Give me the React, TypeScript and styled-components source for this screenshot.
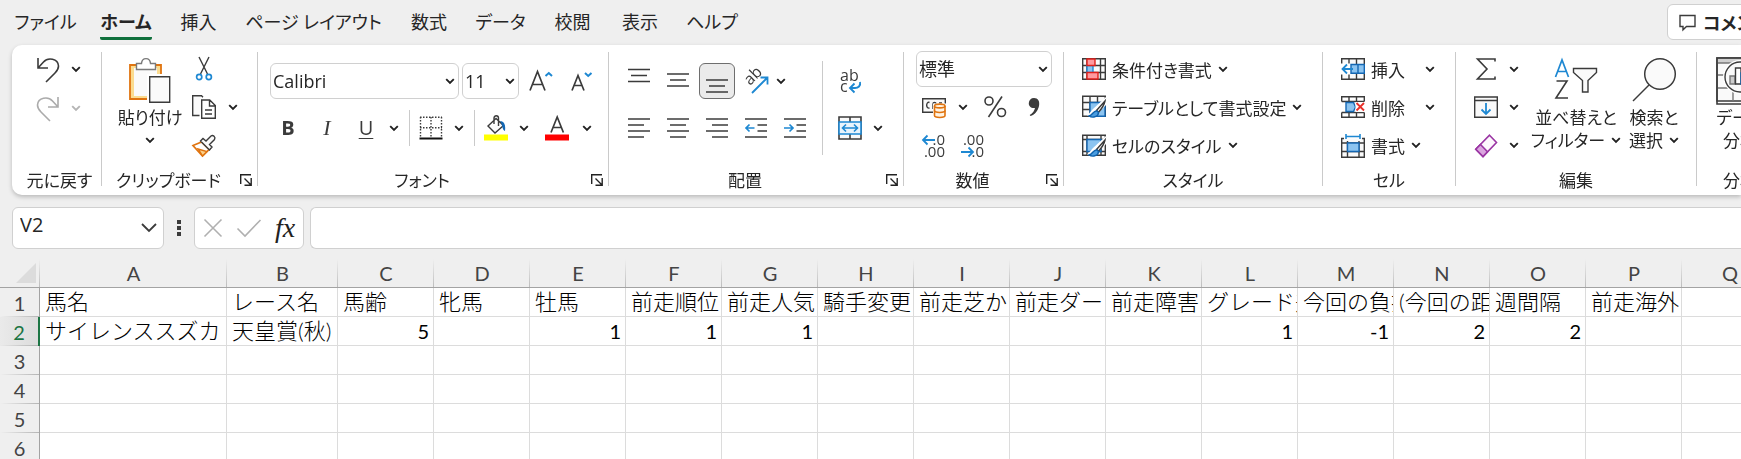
import React from "react";
import styled, { createGlobalStyle, css } from "styled-components";

const ui = `"Open Sans", "Noto Sans CJK JP", sans-serif`;
const sheetFont = `Lato, "Noto Sans CJK JP", sans-serif`;
const ink = "#3b3b3b";
const blue = "#1e88d2";
const orange = "#e07410";
const hair = "#d0d0d0";

const Global = createGlobalStyle`
  *, *::before, *::after { box-sizing: border-box; }
  body { margin: 0; background: #efefef; color: #262626; font-family: ${ui}; font-feature-settings: "palt"; }
  button, input, select { font: inherit; color: inherit; font-feature-settings: inherit; }
  svg { display: block; flex: none; overflow: visible; }
`;

const Window = styled.div`
  height: 100vh;
  display: flex;
  flex-direction: column;
  overflow: hidden;
`;

/* ---------- tabs ---------- */
const TabBar = styled.header`
  display: flex;
  align-items: flex-start;
  height: 45px;
  padding: 4px 0 0 4px;
  flex: none;
`;
const Nav = styled.nav`
  display: flex;
`;
const Tab = styled.a<{ $w: number; $active?: boolean }>`
  width: ${(p) => p.$w}px;
  height: 36px;
  display: flex;
  justify-content: center;
  color: #262626;
  text-decoration: none;
  white-space: nowrap;
  font-size: 18px;
  line-height: 36px;
  font-weight: ${(p) => (p.$active ? 700 : 400)};
  span { height: 36px; border-bottom: 3px solid ${(p) => (p.$active ? "#10703c" : "transparent")}; border-radius: 2px; }
`;
const CommentButton = styled.button`
  display: flex;
  align-items: center;
  flex: none;
  gap: 7px;
  width: 130px;
  height: 36px;
  margin: 0 -56px 0 auto;
  padding: 0 0 0 11px;
  border: 1px solid ${hair};
  border-radius: 6px;
  background: #fff;
  font-size: 18px;
  font-weight: 700;
  white-space: nowrap;
`;

/* ---------- ribbon ---------- */
const Ribbon = styled.section`
  display: flex;
  flex: none;
  height: 150px;
  margin-left: 12px;
  overflow: hidden;
  background: #fff;
  border-radius: 10px 0 0 10px;
  font-size: 17px;
`;
const RibbonShadow = styled.div`
  flex: none;
  filter: drop-shadow(0 2px 2px rgba(0, 0, 0, 0.22));
`;
const GroupBox = styled.div<{ $w: number }>`
  display: flex;
  flex-direction: column;
  flex: none;
  width: ${(p) => p.$w}px;
`;
const Rule = styled.div<{ $short?: boolean; $inner?: boolean }>`
  flex: none;
  width: 1px;
  background: #cacaca;
  margin: ${(p) => (p.$inner ? "16px 9px 10px" : p.$short ? "0 0 0 2px" : "7px 0 9px")};
  ${(p) => p.$short && css`height: 36px;`}
`;
const Body = styled.div<{ $left?: number; $gap?: number }>`
  display: flex;
  height: 120px;
  padding-left: ${(p) => p.$left ?? 12}px;
  gap: ${(p) => p.$gap ?? 0}px;
`;
const Foot = styled.div<{ $indent?: number }>`
  display: flex;
  align-items: center;
  height: 30px;
  padding-left: ${(p) => p.$indent ?? 0}px;
  white-space: nowrap;
`;
const FootLabel = styled.span`
  flex: 1;
  padding-bottom: 2px;
  text-align: center;
`;
const ThreeRows = styled.div`
  display: flex;
  flex-direction: column;
  padding-top: 5px;
`;
const TwoRows = styled.div`
  display: flex;
  flex-direction: column;
  gap: 11px;
  padding-top: 18px;
`;
const Row = styled.div<{ $tall?: boolean }>`
  display: flex;
  align-items: center;
  gap: 3px;
  height: ${(p) => (p.$tall ? 39 : 36)}px;
`;
const Split = styled.div`
  display: flex;
`;
const IconButton = styled.button<{ $w?: number; $on?: boolean }>`
  display: flex;
  align-items: center;
  justify-content: center;
  flex: none;
  width: ${(p) => p.$w ?? 36}px;
  height: 36px;
  padding: 0;
  border: 1px solid ${(p) => (p.$on ? "#6e6e6e" : "transparent")};
  border-radius: 6px;
  background: ${(p) => (p.$on ? "#ebebeb" : "transparent")};
`;
const LabelButton = styled.button`
  display: flex;
  align-items: center;
  gap: 6px;
  height: 36px;
  padding: 0;
  border: 0;
  background: transparent;
  white-space: nowrap;
`;
const BigButton = styled.button<{ $w: number }>`
  display: flex;
  flex-direction: column;
  align-items: center;
  flex: none;
  width: ${(p) => p.$w}px;
  padding: 12px 0 0;
  border: 0;
  background: transparent;
  line-height: 23px;
  white-space: nowrap;
`;
const BigIcon = styled.span`
  display: flex;
  justify-content: center;
  height: 49px;
`;
const BigLine = styled.span`
  display: flex;
  align-items: center;
  gap: 6px;
  height: 23px;
`;
const SelectWrap = styled.div<{ $w: number }>`
  display: grid;
  align-items: center;
  flex: none;
  width: ${(p) => p.$w}px;
  height: 36px;
  select, svg { grid-area: 1 / 1; }
  svg { justify-self: end; margin-right: 4px; pointer-events: none; }
`;
const Select = styled.select`
  appearance: none;
  width: 100%;
  height: 36px;
  padding: 0 2px;
  border: 1px solid ${hair};
  border-radius: 6px;
  background: #fff;
  font-size: 18px;
`;
const Glyph = styled.span<{ $kind: "b" | "i" | "u" }>`
  color: ${ink};
  font-size: 20px;
  line-height: 24px;
  ${(p) => p.$kind === "b" && css`font-weight: 700;`}
  ${(p) => p.$kind === "i" && css`font-family: "Liberation Serif", serif; font-style: italic; font-size: 22px;`}
  ${(p) => p.$kind === "u" && css`text-decoration: underline; text-underline-offset: 3px; text-decoration-thickness: 1px;`}
`;

/* ---------- formula bar ---------- */
const FormulaBar = styled.div`
  display: flex;
  flex: none;
  height: 42px;
  margin: 12px 0 10px 12px;
`;
const Field = styled.div`
  display: flex;
  align-items: center;
  border: 1px solid ${hair};
  border-radius: 6px;
  background: #fff;
`;
const NameField = styled(Field)`
  width: 152px;
  padding: 0 4px 0 7px;
`;
const NameInput = styled.input`
  flex: 1;
  min-width: 0;
  height: 32px;
  margin-bottom: 8px;
  padding: 0;
  border: 0;
  background: transparent;
  font-size: 20px;
`;
const Dots = styled.div`
  display: flex;
  align-items: center;
  justify-content: center;
  width: 30px;
`;
const FxField = styled(Field)`
  width: 110px;
`;
const FxText = styled.span`
  font: italic 400 28px "Liberation Serif", serif;
  color: #222;
`;
const FormulaInput = styled.input`
  flex: 1;
  min-width: 0;
  margin-left: 6px;
  padding: 0 10px;
  border: 1px solid ${hair};
  border-right: 0;
  border-radius: 6px 0 0 6px;
  background: #fff;
  font-size: 20px;
`;

/* ---------- sheet ---------- */
const SheetArea = styled.main`
  flex: 1;
  min-height: 0;
  overflow: hidden;
`;
const Sheet = styled.table`
  table-layout: fixed;
  width: 0;
  border-collapse: separate;
  border-spacing: 0;
  font-family: ${sheetFont};
  font-feature-settings: normal;
`;
const Col = styled.col<{ $w: number }>`
  width: ${(p) => p.$w}px;
`;
const headText = css`
  padding: 0;
  font-size: 20px;
  font-weight: 400;
  line-height: 28px;
  color: #444;
`;
const ColHead = styled.th`
  ${headText}
  height: 29px;
  border-bottom: 1px solid #a3a3a3;
  background: linear-gradient(to bottom, transparent, #bdbdbd) right / 1px 100% no-repeat;
`;
const Corner = styled.th`
  height: 29px;
  padding: 0;
  border-bottom: 1px solid #a3a3a3;
  background: linear-gradient(to bottom, transparent, #bdbdbd) right / 1px 100% no-repeat;
  svg { margin-left: 15px; }
`;
const RowHead = styled.th<{ $on?: boolean }>`
  ${headText}
  height: 29px;
  border-right: 1px solid #a3a3a3;
  background: linear-gradient(to right, transparent, #b5b5b5) bottom / 100% 1px no-repeat;
  ${(p) =>
    p.$on &&
    css`
      color: #1c7544;
      border-right: 2px solid #1c7544;
      background: linear-gradient(to right, transparent, #b5b5b5) bottom / 100% 1px no-repeat,
        linear-gradient(to right, #eaeaea, #dcdcdc);
    `}
`;
const Cell = styled.td<{ $num?: boolean }>`
  height: 29px;
  padding: 0 4px 0 5px;
  border-right: 1px solid #dcdcdc;
  border-bottom: 1px solid #dcdcdc;
  background: #fff;
  color: #000;
  overflow: hidden;
  white-space: nowrap;
  font-size: ${(p) => (p.$num ? 20 : 22)}px;
  font-weight: ${(p) => (p.$num ? 400 : 300)};
  line-height: 28px;
  text-align: ${(p) => (p.$num ? "right" : "left")};
`;

/* ---------- icons ---------- */
type SvgProps = { w: number; h: number; c?: string; sw?: number; children: React.ReactNode };
const Svg = ({ w, h, c = ink, sw = 1.4, children }: SvgProps) => (
  <svg width={w} height={h} viewBox={`0 0 ${w} ${h}`} fill="none" stroke={c} strokeWidth={sw} aria-hidden="true">
    {children}
  </svg>
);
const Chevron = ({ c = "#222" }: { c?: string }) => (
  <Svg w={10} h={7} c={c} sw={1.9}>
    <path d="M1.2 1.2 5 5l3.8-3.8" />
  </Svg>
);
const Launcher = () => (
  <Svg w={12} h={12} c="#222">
    <path d="M.7 10V.7H11M4.5 4.5l6 6M11.2 4v7.2H4.5" />
  </Svg>
);
const UndoIcon = ({ flip }: { flip?: boolean }) => (
  <Svg w={24} h={26} c={flip ? "#ababab" : ink} sw={1.6}>
    <g transform={flip ? "matrix(-1 0 0 1 24 0)" : undefined}>
      <path d="M2 1v10h10M2 11 7.5 5C12 0 22 1.5 22.5 9c0 3-1.5 5-3.5 7l-9 9" />
    </g>
  </Svg>
);
const PasteIcon = () => (
  <Svg w={42} h={46}>
    <path d="M1 8h31v34H1z" fill="#fbdc90" stroke={orange} strokeWidth={1.8} />
    <path d="M5 11h23v28H5z" fill="#fafafa" stroke="none" />
    <path d="M18 17h24v29H18z" fill="#fff" stroke="none" />
    <path d="M7.5 12.500V6.500h5c.5-6.500 8.500-6.500 9 0h5v6z" fill="#fff" stroke="#7a7a7a" />
    <path d="M20.700 19.700h20v25.600h-20z" fill="#fafafa" />
  </Svg>
);
const CutIcon = () => (
  <Svg w={16} h={24}>
    <path d="M3 0l8.500 17M13 0 4.500 17" />
    <circle cx="3.200" cy="20" r="2.600" stroke={blue} strokeWidth={1.7} />
    <circle cx="12.800" cy="20" r="2.600" stroke={blue} strokeWidth={1.7} />
  </Svg>
);
const CopyIcon = () => (
  <Svg w={24} h={24}>
    <path d="M7.5 20.500H.7V.7h8.800l1.500 1.500" fill="#fafafa" />
    <path d="M9.700 5h8l5.600 5.600v12.700H9.700zM17.500 5v6h6M13 15h7M13 19h7" />
  </Svg>
);
const BrushIcon = () => (
  <Svg w={24} h={22}>
    <path d="M1 10.500 9.500 7l7.500 7.500L10.500 21z" fill="#fff" stroke={orange} strokeWidth={1.7} />
    <path d="M6 14l9 2.500-4.500 4.500z" fill="#fbcf87" stroke={orange} />
    <path d="M8.500 6l2.500-2.500 3 2.500 5-5c2-1.500 5 1 3.500 3.500l-5 5 2.500 2.500-2.500 3z" fill="#fafafa" />
  </Svg>
);
const GrowA = ({ down }: { down?: boolean }) => (
  <Svg w={24} h={22}>
    {down ? (
      <>
        <path d="M2 20.500 8 5.500l6 15M4.200 15.500h7.600" strokeWidth={1.7} />
        <path d="M15 3l3.200 3L21.500 3" stroke={blue} strokeWidth={2} />
      </>
    ) : (
      <>
        <path d="M1 20.500 8.500 1.500l7.500 19M3.600 14.500h9.800" strokeWidth={1.7} />
        <path d="M16.500 6 19.800 3 23 6" stroke={blue} strokeWidth={2} />
      </>
    )}
  </Svg>
);
const BorderIcon = () => (
  <Svg w={24} h={24}>
    <path d="M1 1.200h22M1 11.700h22" strokeDasharray="1.500 1.500" />
    <path d="M1.500 1v20M12 1v20M22.500 1v20" strokeDasharray="1.500 1.500" />
    <path d="M.5 22.500h23" stroke="#111" strokeWidth={1.8} />
  </Svg>
);
const FillIcon = () => (
  <Svg w={24} h={26}>
    <path d="M12 3.500 4 11l7 7 8.500-7.500zM10 9V3c0-3 4.500-3 4.500 0v8" fill="#fafafa" />
    <path d="M16 6c4 0 6 4 5 10-3-1-2-5-5-10z" fill="#1467b3" stroke="none" />
    <path d="M0 19.500h24v6H0z" fill="#ff0" stroke="none" />
  </Svg>
);
const FontColorIcon = () => (
  <Svg w={24} h={26}>
    <path d="M6 17.500 12.200 2l6.200 15.500M8 12.500h8.400" strokeWidth={1.7} />
    <path d="M0 19.500h24v6H0z" fill="#f00" stroke="none" />
  </Svg>
);
const Lines = ({ rows, h }: { rows: number[][]; h: number }) => (
  <Svg w={22} h={h} sw={1.5}>
    {rows.map(([a, b, y]) => (
      <path key={y} d={`M${a} ${y}H${b}`} />
    ))}
  </Svg>
);
const Indent = ({ right }: { right?: boolean }) => (
  <Svg w={22} h={20} sw={1.5}>
    <path d="M0 1h22M12.500 7H22M12.500 13H22M0 19h22" />
    <path d={right ? "M0 10h9M5.500 6.500 9 10l-3.500 3.500" : "M9.500 10H1M4.500 6.500 1 10l3.500 3.500"} stroke={blue} strokeWidth={1.7} />
  </Svg>
);
const OrientIcon = () => (
  <Svg w={26} h={26}>
    <text x="0" y="0" transform="translate(7 18) rotate(-45)" fontSize="16" fill={ink} stroke="none">
      ab
    </text>
    <path d="M9 25 24 10M17.500 9.500H24.500V16.500" stroke={blue} strokeWidth={1.8} />
  </Svg>
);
const WrapIcon = () => (
  <Svg w={22} h={26}>
    <text x="1" y="13" fontSize="16" fill={ink} stroke="none">
      ab
    </text>
    <text x="1" y="24" fontSize="16" fill={ink} stroke="none">
      c
    </text>
    <path d="M21 14c1 4-2 6-5 6H11M15.500 15.500 11 20l4.500 4.500" stroke={blue} strokeWidth={1.9} />
  </Svg>
);
const MergeIcon = () => (
  <Svg w={24} h={24}>
    <path d="M1 1h22v22H1zM12 1v5M12 18v5" fill="#fafafa" strokeWidth={1.6} />
    <path d="M1 6h22v12H1z" fill="#e9f4fc" stroke={blue} strokeWidth={1.6} />
    <path d="M4.500 12h15M8 8.500 4.500 12 8 15.500M16 8.500l3.500 3.500-3.500 3.500" stroke={blue} strokeWidth={1.6} />
  </Svg>
);
const CurrencyIcon = () => (
  <Svg w={24} h={22}>
    <path d="M.7 2.700h22.600v13.600H.7z" fill="#fafafa" />
    <path d="M7.500 6.500C4 5 3.500 13 7.500 12M11 13V8c0-2 3-2 3 0M17 7h3" />
    <path d="M11 7.500h13V22H11z" fill="#fff" stroke="none" />
    <path d="M12.500 10v9.500c0 2.600 10.500 2.600 10.500 0V10" fill="#fff3e2" stroke={orange} strokeWidth={1.6} />
    <ellipse cx="17.750" cy="10" rx="5.250" ry="1.900" fill="#fff3e2" stroke={orange} strokeWidth={1.6} />
    <path d="M12.500 14.500c0 2.600 10.500 2.600 10.500 0" stroke={orange} strokeWidth={1.6} />
  </Svg>
);
const PercentIcon = () => (
  <Svg w={24} h={24} sw={1.6}>
    <circle cx="6" cy="6" r="4" />
    <circle cx="18.500" cy="17.500" r="4" />
    <path d="M19 1.500 5.500 22" />
  </Svg>
);
const CommaIcon = () => (
  <Svg w={14} h={20}>
    <path d="M7 1c4 0 6 3 5 8-1 5-4.500 9-8.500 10l-.8-1C6 16 7.500 13.500 8 11 4 11.500 1.500 9 1.800 6 2 3 4 1 7 1z" fill={ink} stroke="none" />
  </Svg>
);
const DecimalIcon = ({ less }: { less?: boolean }) => (
  <Svg w={24} h={26}>
    <text x="23" y="12" fontSize="15" fill={ink} stroke="none" textAnchor="end">
      {less ? ".00" : ".0"}
    </text>
    <text x="23" y="24" fontSize="15" fill={ink} stroke="none" textAnchor="end">
      {less ? ".0" : ".00"}
    </text>
    <path d={less ? "M0 19h12M7.500 14.500 12 19l-4.500 4.500" : "M13 7H1M5.500 2.500 1 7l4.500 4.500"} stroke={blue} strokeWidth={1.8} />
  </Svg>
);
const gridPath = "M.7.7h22.600v20.600H.7zM5 .7v20.600M18.500.7v20.600M.7 7.500h22.600M.7 14.500h22.600";
const CondIcon = () => (
  <Svg w={24} h={22}>
    <path d={gridPath} fill="#fafafa" />
    <path d="M5 7.500h6v7H5z" fill="#8cc4f0" stroke={blue} />
    <path d="M5 1h8v6.500H5zM5 14.500h11V21H5z" fill="#ff9a9f" stroke="#e0201c" />
  </Svg>
);
const PaintBrush = () => (
  <>
    <path d="M24 2 11 14l-6 7h8l11-11z" fill="#fff" stroke="none" />
    <path d="M23 6 14.500 15.500l2 1.800C19 14.500 22 11 23 6z" fill="#fafafa" />
    <path d="M15 16c-4-.5-4 4-8 5 4 2.500 9.500.5 9.500-3.500z" fill="#4a9de0" stroke="#0f62ad" />
  </>
);
const TableIcon = () => (
  <Svg w={24} h={24}>
    <path d="M.7 1.200h22.600v20H.7zM8 1.200v20M15.500 1.200v20M.7 7.500h22.600M.7 14.500h22.600" fill="#fafafa" />
    <path d="M8 7.500h15v13.700H8z" fill="#8cc4f0" stroke="#1467b3" />
    <PaintBrush />
  </Svg>
);
const StyleIcon = () => (
  <Svg w={24} h={24}>
    <path d="M.7 1.200h22.600v20H.7zM5 1.200v20M.7 5.500h22.600M.7 17.500h22.600M19 1.200v20" fill="#fafafa" />
    <path d="M5 5.500h14v12H5z" fill="#8cc4f0" stroke="#1467b3" />
    <PaintBrush />
  </Svg>
);
const InsertIcon = () => (
  <Svg w={24} h={22}>
    <path d="M.7 6V.7h22.600v20.600H.7V16M8 .7V6M15.500.7V6M8 16v5.300M15.500 16v5.300" fill="#fafafa" />
    <path d="M10 6.500h13.300v8.800H10zM17 6.500v8.800" fill="#8cc4f0" stroke="#1467b3" />
    <path d="M0 5.500h9v11H0z" fill="#fff" stroke="none" />
    <path d="M12 11H1.500M6 6.500 1.500 11 6 15.500" stroke={blue} strokeWidth={1.8} />
  </Svg>
);
const DeleteIcon = () => (
  <Svg w={24} h={22}>
    <path d="M.7 5.500V.7h22.600v4.800M.7 5.500h22.600M.7 16.500v4.800h22.600v-4.800M.7 16.500h22.600M8 .7v4.800M15.500.7v4.800M8 16.500v4.800M15.500 16.500v4.800" />
    <path d="M5 6.500h7.500L14.500 11l-2 4.500H5z" fill="#8cc4f0" stroke="#1467b3" />
    <path d="M14.500 6h9.500v10h-9.500z" fill="#fff" stroke="none" />
    <path d="M15.500 7l7.500 7.500M23 7l-7.500 7.500" stroke="#e8302a" strokeWidth={1.8} />
  </Svg>
);
const FormatIcon = () => (
  <Svg w={24} h={24}>
    <path d="M3 4.500H.7v18.800h22.600V4.500H21M6.500 7v16.300M18 7v16.300M.7 9h22.600M.7 17.500h22.600" fill="#fafafa" />
    <path d="M6.500 9H18v8.500H6.500z" fill="#8cc4f0" stroke="#1467b3" />
    <path d="M5 0v5M19 0v5M5 2.500h14" stroke={blue} strokeWidth={1.6} />
  </Svg>
);
const SumIcon = () => (
  <Svg w={20} h={22} sw={1.6}>
    <path d="M19 3.500V1H1.500l9.500 10-9.500 10H19v-2.500" />
  </Svg>
);
const FillDownIcon = () => (
  <Svg w={24} h={22}>
    <path d="M.7 1h22.600v20.300H.7zM.7 4.500h22.600" fill="#fafafa" />
    <path d="M12 7v11M7.500 13.500 12 18l4.500-4.500" stroke={blue} strokeWidth={1.8} />
  </Svg>
);
const EraserIcon = () => (
  <Svg w={24} h={24} c="#9a35a3" sw={1.6}>
    <path d="M15.500 1.200 22.500 8.500 9 22.500 1.800 15.200z" fill="#fdf7fd" />
    <path d="M6.500 10.500 13.500 17.700 9 22.500 1.800 15.200z" fill="#dba5df" />
  </Svg>
);
const SortFilterIcon = () => (
  <Svg w={44} h={44}>
    <path d="M1.500 20 8 3l6.500 17M3.600 14.500h8.800" stroke={blue} strokeWidth={1.7} />
    <path d="M2.500 24H13L2 41h12" strokeWidth={1.6} />
    <path d="M19.500 11.500h23v4L34 23.500v11.500h-5.500V23.500l-9-8z" fill="#fafafa" />
  </Svg>
);
const SearchIcon = () => (
  <Svg w={44} h={46} sw={1.5}>
    <circle cx="28" cy="17" r="15.300" fill="#fafafa" />
    <path d="M17 28 1 44" />
  </Svg>
);
const AnalyzeIcon = () => (
  <Svg w={48} h={48}>
    <path d="M1 1h46v43H1z" fill="#fafafa" />
    <path d="M1 1h46v5H1z" fill="#cfcfcf" stroke="#777" />
    <path d="M1 18h8M1 31h14M17 35v9M32 35v9" stroke="#777" />
    <path d="M1 1h46v46H1z" strokeWidth={1.6} />
    <circle cx="24" cy="20" r="17" fill="#fff" stroke="none" />
    <circle cx="24" cy="20" r="15" fill="#fafafa" />
    <path d="M14 19h5v8h-5z" fill="#ccc" stroke="#777" />
    <path d="M19.500 11h5.500v16h-5.500z" fill="#fff" />
    <path d="M25 16h5v11h-5z" fill="#8cc4f0" stroke="#1467b3" />
  </Svg>
);
const CommentIcon = () => (
  <Svg w={17} h={17}>
    <path d="M1 1.500h15v11H7.500L4 15.800V12.500H1z" />
  </Svg>
);

/* ---------- pieces ---------- */
const More = ({ label, w = 20, c }: { label: string; w?: number; c?: string }) => (
  <IconButton type="button" $w={w} aria-label={`${label}のオプション`}>
    <Chevron c={c} />
  </IconButton>
);
const Tool = ({ label, w, on, children }: { label: string; w?: number; on?: boolean; children: React.ReactNode }) => (
  <IconButton type="button" $w={w} $on={on} aria-label={label}>
    {children}
  </IconButton>
);
const Group = ({ name, w, launcher, indent, children }: { name: string; w: number; launcher?: boolean; indent?: number; children: React.ReactNode }) => (
  <>
    <GroupBox $w={w} role="group" aria-label={name}>
      {children}
      <Foot $indent={indent}>
        <FootLabel>{name}</FootLabel>
        {launcher && (
          <Tool label={`${name}の設定`} w={22}>
            <Launcher />
          </Tool>
        )}
      </Foot>
    </GroupBox>
    <Rule />
  </>
);
const Picker = ({ label, w, value }: { label: string; w: number; value: string }) => (
  <SelectWrap $w={w}>
    <Select aria-label={label} defaultValue={value}>
      <option>{value}</option>
    </Select>
    <Chevron />
  </SelectWrap>
);

const tabs: [string, number][] = [
  ["ファイル", 83],
  ["ホーム", 78],
  ["挿入", 67],
  ["ページ レイアウト", 163],
  ["数式", 68],
  ["データ", 75],
  ["校閲", 69],
  ["表示", 66],
  ["ヘルプ", 78],
];
const columns = "ABCDEFGHIJKLMNOPQ".split("");
const widths = [187, 111, ...Array(15).fill(96)];
const rows: (string | number)[][] = [
  ["馬名", "レース名", "馬齢", "牝馬", "牡馬", "前走順位", "前走人気", "騎手変更", "前走芝か", "前走ダー", "前走障害", "グレード差", "今回の負担", "(今回の距離", "週間隔", "前走海外"],
  ["サイレンススズカ", "天皇賞(秋)", 5, "", 1, 1, 1, "", "", "", "", 1, -1, 2, 2],
  [],
  [],
  [],
  [],
];

export default function App() {
  return (
    <Window>
      <Global />
      <TabBar>
        <Nav>
          {tabs.map(([t, w]) => (
            <Tab key={t} href="#" $w={w} $active={t === "ホーム"}>
              <span>{t}</span>
            </Tab>
          ))}
        </Nav>
        <CommentButton type="button">
          <CommentIcon />
          コメント
        </CommentButton>
      </TabBar>

      <RibbonShadow>
        <Ribbon>
          <Group name="元に戻す" w={89} indent={6}>
            <Body $left={23}>
              <ThreeRows>
                <Row $tall>
                  <Tool label="元に戻す" w={26}><UndoIcon /></Tool>
                  <More label="元に戻す" w={24} />
                </Row>
                <Row $tall>
                  <Tool label="やり直し" w={26}><UndoIcon flip /></Tool>
                  <More label="やり直し" w={24} c="#b5b5b5" />
                </Row>
              </ThreeRows>
            </Body>
          </Group>

          <Group name="クリップボード" w={155} launcher>
            <Body $gap={4}>
              <BigButton type="button" $w={72}>
                <BigIcon><PasteIcon /></BigIcon>
                <BigLine>貼り付け</BigLine>
                <BigLine><Chevron /></BigLine>
              </BigButton>
              <ThreeRows>
                <Row $tall><Tool label="切り取り" w={28}><CutIcon /></Tool></Row>
                <Row $tall>
                  <Tool label="コピー" w={28}><CopyIcon /></Tool>
                  <More label="コピー" w={24} />
                </Row>
                <Row $tall><Tool label="書式のコピー" w={28}><BrushIcon /></Tool></Row>
              </ThreeRows>
            </Body>
          </Group>

          <Group name="フォント" w={350} launcher>
            <Body>
              <TwoRows>
                <Row>
                  <Picker label="フォント" w={189} value="Calibri" />
                  <Picker label="フォント サイズ" w={57} value="11" />
                  <Tool label="フォント サイズの拡大" w={38}><GrowA /></Tool>
                  <Tool label="フォント サイズの縮小" w={38}><GrowA down /></Tool>
                </Row>
                <Row>
                  <Tool label="太字"><Glyph $kind="b">B</Glyph></Tool>
                  <Tool label="斜体"><Glyph $kind="i">I</Glyph></Tool>
                  <Split>
                    <Tool label="下線"><Glyph $kind="u">U</Glyph></Tool>
                    <More label="下線" />
                  </Split>
                  <Rule $short />
                  <Split>
                    <Tool label="罫線"><BorderIcon /></Tool>
                    <More label="罫線" />
                  </Split>
                  <Rule $short />
                  <Split>
                    <Tool label="塗りつぶしの色"><FillIcon /></Tool>
                    <More label="塗りつぶしの色" />
                  </Split>
                  <Split>
                    <Tool label="フォントの色" w={40}><FontColorIcon /></Tool>
                    <More label="フォントの色" />
                  </Split>
                </Row>
              </TwoRows>
            </Body>
          </Group>

          <Group name="配置" w={294} launcher>
            <Body>
              <TwoRows>
                <Row>
                  <Tool label="上揃え"><Lines h={26} rows={[[0, 22, 1.5], [3, 19, 7.5], [0, 22, 13.5]]} /></Tool>
                  <Tool label="上下中央揃え"><Lines h={26} rows={[[0, 22, 6], [3, 19, 12], [0, 22, 18]]} /></Tool>
                  <Tool label="下揃え" on><Lines h={26} rows={[[0, 22, 12], [3, 19, 18], [0, 22, 24]]} /></Tool>
                  <Split>
                    <Tool label="方向"><OrientIcon /></Tool>
                    <More label="方向" w={14} />
                  </Split>
                </Row>
                <Row>
                  <Tool label="左揃え"><Lines h={20} rows={[[0, 22, 1], [0, 16, 7], [0, 22, 13], [0, 16, 19]]} /></Tool>
                  <Tool label="中央揃え"><Lines h={20} rows={[[0, 22, 1], [3, 19, 7], [0, 22, 13], [3, 19, 19]]} /></Tool>
                  <Tool label="右揃え"><Lines h={20} rows={[[0, 22, 1], [6, 22, 7], [0, 22, 13], [6, 22, 19]]} /></Tool>
                  <Tool label="インデントを減らす"><Indent /></Tool>
                  <Tool label="インデントを増やす"><Indent right /></Tool>
                </Row>
              </TwoRows>
              <Rule $inner />
              <TwoRows>
                <Row><Tool label="折り返して全体を表示する"><WrapIcon /></Tool></Row>
                <Split>
                  <Tool label="セルを結合して中央揃え"><MergeIcon /></Tool>
                  <More label="セルの結合" />
                </Split>
              </TwoRows>
            </Body>
          </Group>

          <Group name="数値" w={159} launcher>
            <Body>
              <ThreeRows>
                <Row $tall><Picker label="表示形式" w={136} value="標準" /></Row>
                <Row $tall>
                  <Split>
                    <Tool label="通貨表示形式"><CurrencyIcon /></Tool>
                    <More label="通貨表示形式" w={22} />
                  </Split>
                  <Tool label="パーセント"><PercentIcon /></Tool>
                  <Tool label="桁区切り"><CommaIcon /></Tool>
                </Row>
                <Row $tall>
                  <Tool label="小数点以下の表示桁数を増やす"><DecimalIcon /></Tool>
                  <Tool label="小数点以下の表示桁数を減らす"><DecimalIcon less /></Tool>
                </Row>
              </ThreeRows>
            </Body>
          </Group>

          <Group name="スタイル" w={258}>
            <Body $left={18}>
              <ThreeRows>
                <Row $tall><LabelButton type="button"><CondIcon />条件付き書式<Chevron /></LabelButton></Row>
                <Row $tall><LabelButton type="button"><TableIcon />テーブルとして書式設定<Chevron /></LabelButton></Row>
                <Row $tall><LabelButton type="button"><StyleIcon />セルのスタイル<Chevron /></LabelButton></Row>
              </ThreeRows>
            </Body>
          </Group>

          <Group name="セル" w={132}>
            <Body $left={18}>
              <ThreeRows>
                <Row $tall>
                  <LabelButton type="button"><InsertIcon />挿入</LabelButton>
                  <More label="挿入" w={44} />
                </Row>
                <Row $tall>
                  <LabelButton type="button"><DeleteIcon />削除</LabelButton>
                  <More label="削除" w={44} />
                </Row>
                <Row $tall><LabelButton type="button"><FormatIcon />書式<Chevron /></LabelButton></Row>
              </ThreeRows>
            </Body>
          </Group>

          <Group name="編集" w={240}>
            <Body>
              <ThreeRows>
                <Row $tall><Split><Tool label="オート SUM"><SumIcon /></Tool><More label="オート SUM" /></Split></Row>
                <Row $tall><Split><Tool label="フィル"><FillDownIcon /></Tool><More label="フィル" /></Split></Row>
                <Row $tall><Split><Tool label="クリア"><EraserIcon /></Tool><More label="クリア" /></Split></Row>
              </ThreeRows>
              <BigButton type="button" $w={104}>
                <BigIcon><SortFilterIcon /></BigIcon>
                <BigLine>並べ替えと</BigLine>
                <BigLine>フィルター<Chevron /></BigLine>
              </BigButton>
              <BigButton type="button" $w={52}>
                <BigIcon><SearchIcon /></BigIcon>
                <BigLine>検索と</BigLine>
                <BigLine>選択<Chevron /></BigLine>
              </BigButton>
            </Body>
          </Group>

          <Group name="分析" w={86}>
            <Body $left={0}>
              <BigButton type="button" $w={86}>
                <BigIcon><AnalyzeIcon /></BigIcon>
                <BigLine>データ</BigLine>
                <BigLine>分析</BigLine>
              </BigButton>
            </Body>
          </Group>
        </Ribbon>
      </RibbonShadow>

      <FormulaBar>
        <NameField>
          <NameInput aria-label="名前ボックス" defaultValue="V2" />
          <IconButton type="button" $w={20} aria-label="名前の一覧">
            <Svg w={16} h={10} sw={1.8}><path d="M1 1l7 7 7-7" /></Svg>
          </IconButton>
        </NameField>
        <Dots>
          <Svg w={4} h={16}><path d="M0 0h4v4H0zM0 6h4v4H0zM0 12h4v4H0z" fill={ink} stroke="none" /></Svg>
        </Dots>
        <FxField>
          <Tool label="キャンセル"><Svg w={18} h={18} c="#b0b0b0" sw={1.6}><path d="M.5.5l17 17M17.500.5l-17 17" /></Svg></Tool>
          <Tool label="入力"><Svg w={24} h={18} c="#b0b0b0" sw={1.6}><path d="M.5 9.500 8 17 23.500 1" /></Svg></Tool>
          <Tool label="関数の挿入"><FxText>fx</FxText></Tool>
        </FxField>
        <FormulaInput aria-label="数式バー" />
      </FormulaBar>

      <SheetArea>
        <Sheet>
          <colgroup>
            <Col $w={40} />
            {widths.map((w, i) => (
              <Col key={i} $w={w} />
            ))}
          </colgroup>
          <thead>
            <tr>
              <Corner aria-label="すべて選択">
                <Svg w={22} h={22}><path d="M21 1v20H1z" fill="#dcdcdc" stroke="none" /></Svg>
              </Corner>
              {columns.map((c) => (
                <ColHead key={c} scope="col">{c}</ColHead>
              ))}
            </tr>
          </thead>
          <tbody>
            {rows.map((r, i) => (
              <tr key={i}>
                <RowHead scope="row" $on={i === 1}>{i + 1}</RowHead>
                {columns.map((c, j) => (
                  <Cell key={c} $num={typeof r[j] === "number"}>{r[j]}</Cell>
                ))}
              </tr>
            ))}
          </tbody>
        </Sheet>
      </SheetArea>
    </Window>
  );
}
